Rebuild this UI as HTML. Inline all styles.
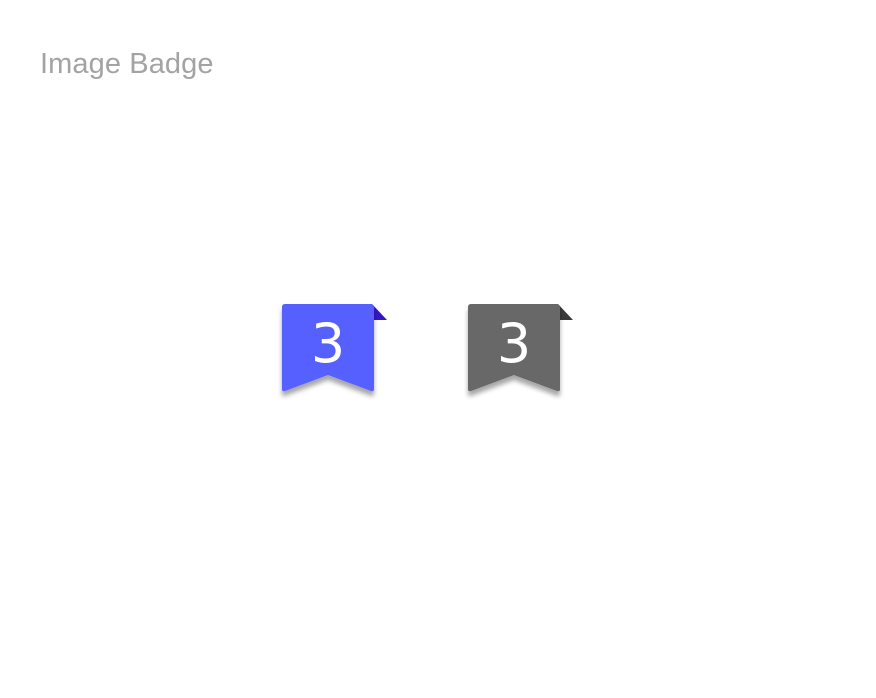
<!DOCTYPE html>
<html><head><meta charset="utf-8"><style>
html,body{margin:0;padding:0;background:#fff;width:876px;height:698px;overflow:hidden}
h1{position:absolute;left:40px;top:48px;margin:0;font:400 29px "Liberation Sans",sans-serif;color:#a3a3a3;letter-spacing:0.1px}
svg{position:absolute;top:0;left:0}
</style></head><body>
<h1>Image Badge</h1>
<svg width="876" height="698">
<defs><filter id="s" x="-20%" y="-20%" width="140%" height="160%"><feDropShadow dx="0" dy="5" stdDeviation="2.5" flood-color="#000" flood-opacity="0.35"/></filter></defs>
<g>
<path d="M372 304 L387 320 L374 320 Z" fill="#3416c8"/>
<path d="M285 304 H372 L374 307 V389 Q374 392 371 391 L328 375 L285 391 Q282 392 282 389 V307 Q282 304 285 304 Z" fill="#5660fe" filter="url(#s)"/>
<text x="328" y="362" text-anchor="middle" font-family="DejaVu Sans,sans-serif" font-size="54" fill="#fff">3</text>
</g>
<g>
<path d="M558 304 L573 320 L560 320 Z" fill="#3a3a3a"/>
<path d="M471 304 H558 L560 307 V389 Q560 392 557 391 L514 375 L471 391 Q468 392 468 389 V307 Q468 304 471 304 Z" fill="#676767" filter="url(#s)"/>
<text x="514" y="362" text-anchor="middle" font-family="DejaVu Sans,sans-serif" font-size="54" fill="#fff">3</text>
</g>
</svg>
</body></html>
